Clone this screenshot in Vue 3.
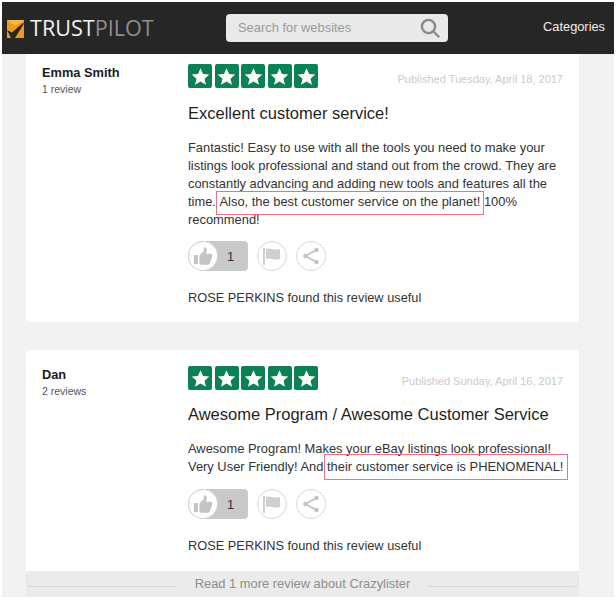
<script setup>
const reviews = [
  { name: 'Emma Smith', count: '1 review', date: 'Published Tuesday, April 18, 2017', title: 'Excellent customer service!' },
  { name: 'Dan', count: '2 reviews', date: 'Published Sunday, April 16, 2017', title: 'Awesome Program / Awesome Customer Service' }
]
const stars = [1, 2, 3, 4, 5]
</script>

<template>
  <div class="page">
    <header class="topbar">
      <div class="logo">
        <svg class="logo-mark" width="17" height="18" viewBox="0 0 17 18">
          <rect width="17" height="18" fill="#ef9a1c" />
          <path d="M0 0H17L8 6Z" fill="#f9b840" />
          <path d="M0 10L5 12.500L16 3L17 3.500L8 18H4Z" fill="#262626" />
        </svg>
        <span class="logo-a">TRUST</span><span class="logo-b">PILOT</span>
      </div>
      <div class="search">
        <span class="search-text">Search for websites</span>
        <svg width="20" height="20" viewBox="0 0 20 20" fill="none" stroke="#8a8a8a" stroke-width="2.4">
          <circle cx="8.500" cy="8.500" r="6.600" />
          <path d="M13.500 13.500L18.500 18.500" stroke-linecap="round" />
        </svg>
      </div>
      <div class="categories">Categories</div>
    </header>

    <main class="content">
      <article v-for="(r, i) in reviews" :key="r.name" class="card" :class="i === 0 ? 'first' : 'second'">
        <div class="author">
          <div class="name">{{ r.name }}</div>
          <div class="count">{{ r.count }}</div>
        </div>
        <div class="body">
          <div class="meta">
            <div class="stars">
              <span v-for="s in stars" :key="s" class="star">
                <svg width="19" height="19" viewBox="0 0 24 24"><path d="M12 1.500l3.200 7.300 7.900.7-6 5.200 1.800 7.800L12 18.400l-6.900 4.100 1.800-7.800-6-5.200 7.900-.7z" fill="#fff" /></svg>
              </span>
            </div>
            <div class="date">{{ r.date }}</div>
          </div>
          <h2 class="title">{{ r.title }}</h2>
          <p v-if="i === 0" class="text">
            Fantastic! Easy to use with all the tools you need to make your<br />
            listings look professional and stand out from the crowd. They are<br />
            constantly advancing and adding new tools and features all the<br />
            time. <span class="mark mark-a">Also, the best customer service on the planet!</span> 100%<br />
            recommend!
          </p>
          <p v-else class="text">
            Awesome Program! Makes your eBay listings look professional!<br />
            Very User Friendly! And <span class="mark mark-b">their customer service is PHENOMENAL!</span>
          </p>
          <div class="actions">
            <div class="like">
              <span class="like-circle">
                <svg width="22" height="22" viewBox="0 0 24 24" fill="#c4c4c4">
                  <rect x="2" y="11" width="4.500" height="10" rx="1" />
                  <path d="M8 11.500L12.500 7 13 2.500c2.500-.5 3.500 1.500 3 4l-.7 3H20.500c1.500 0 2.200 1.500 1.500 3l-2.500 7.500c-.3 1-1 1.500-2 1.500H10c-1 0-2-.5-2-1.500z" />
                </svg>
              </span>
              <span class="like-num">1</span>
            </div>
            <span class="round">
              <svg width="22" height="22" viewBox="0 0 22 22" fill="#cfcfcf">
                <rect x="2" y="3" width="2" height="17" />
                <path d="M5 4c4-2 7 2 14 0v10c-6 2-10-2-14 0z" />
              </svg>
            </span>
            <span class="round">
              <svg width="22" height="22" viewBox="0 0 22 22" fill="#c4c4c4" stroke="#c4c4c4">
                <path d="M16.500 5L5.500 11L16.500 17" fill="none" stroke-width="1.800" />
                <circle cx="16.500" cy="5" r="2.300" stroke="none" />
                <circle cx="5.500" cy="11" r="2.300" stroke="none" />
                <circle cx="16.500" cy="17" r="2.300" stroke="none" />
              </svg>
            </span>
          </div>
          <div class="useful">ROSE PERKINS found this review useful</div>
        </div>
      </article>

      <div class="more">
        <span class="rule"></span>
        <span class="more-text">Read 1 more review about Crazylister</span>
        <span class="rule rule-right"></span>
      </div>
    </main>
  </div>
</template>

<style>
html, body { margin: 0; background: #fff; overflow: hidden; }
</style>

<style scoped>
.page {
  width: 612px;
  height: 595px;
  margin: 2px 2px 0;
  background: #f2f2f2;
  font-family: "Liberation Sans", Arial, sans-serif;
  overflow: hidden;
}
.topbar {
  height: 52px;
  background: #262626;
  display: flex;
  align-items: center;
}
.logo {
  display: flex;
  align-items: center;
  margin-left: 5px;
  font-family: "Open Sans", "Liberation Sans", sans-serif;
  font-size: 21.600px;
  line-height: 50px;
  width: 219px;
}
.logo-mark { margin-right: 6px; margin-top: 1px; }
.logo-a { color: #f1f1f1; }
.logo-b { color: #8e8e8e; }
.search {
  width: 222px;
  height: 28px;
  box-sizing: border-box;
  background: #e9e9e9;
  border-radius: 4px;
  display: flex;
  align-items: center;
  justify-content: space-between;
  padding: 0 8px 0 12px;
  color: #9a9a9a;
  font-size: 12.900px;
}
.search-text { margin-bottom: 2px; }
.categories {
  margin-left: auto;
  margin-right: 9px;
  margin-bottom: 3px;
  color: #eee;
  font-size: 12.800px;
}
.content { padding: 0 35px 0 24px; }
.card {
  background: #fff;
  display: flex;
  box-sizing: border-box;
}
.first { height: 268px; padding-top: 10px; margin-bottom: 28px; border-radius: 0 0 4px 4px; }
.second { height: 221px; padding-top: 16px; border-radius: 4px 4px 0 0; }
.author { width: 162px; padding-left: 16px; box-sizing: border-box; flex: none; }
.name { font-weight: 700; font-size: 12.800px; color: #1c1c1c; line-height: 18px; }
.count { font-size: 10.500px; color: #555; line-height: 15px; }
.body { flex: 1; min-width: 0; padding-right: 16px; }
.meta { display: flex; justify-content: space-between; align-items: center; height: 24px; }
.stars { display: flex; gap: 2.500px; }
.star {
  width: 24px;
  height: 24px;
  background: #0b8154;
  border-radius: 2px;
  display: flex;
  align-items: center;
  justify-content: center;
}
.date { color: #cbcbcb; font-size: 11px; margin-top: 5px; }
.title { font-weight: 400; font-size: 16.500px; line-height: 22px; color: #1f1f1f; margin: 14px 0 0; }
.second .title { margin-top: 13px; }
.text { margin: 15px 0 0; font-size: 12.900px; line-height: 18px; color: #333; white-space: nowrap; }
.mark { outline: 1px solid #ee7182; outline-offset: -1px; padding: 0 4px; margin: 0 -4px; }
.mark-a { padding-top: 3px; padding-bottom: 6px; }
.mark-b { padding-top: 5px; padding-bottom: 6px; margin-left: -3px; padding-left: 3px; margin-right: -5px; padding-right: 5px; }
.actions { display: flex; align-items: center; margin-top: 12px; }
.second .actions { margin-top: 13px; }
.like {
  width: 60px;
  height: 30px;
  background: #c9c9c9;
  border-radius: 15px 4px 4px 15px;
  display: flex;
  align-items: center;
}
.like-circle {
  width: 28px;
  height: 28px;
  margin-left: 1px;
  border-radius: 50%;
  background: #fff;
  box-shadow: 0 0 0 1px #d6d6d6;
  display: flex;
  align-items: center;
  justify-content: center;
}
.like-num { margin-left: 10px; font-size: 12.900px; color: #333; }
.round {
  width: 28px;
  height: 28px;
  margin-left: 9px;
  border: 1px solid #d9d9d9;
  border-radius: 50%;
  display: flex;
  align-items: center;
  justify-content: center;
}
.useful { margin-top: 18px; font-size: 12.800px; line-height: 18px; color: #333; }
.more {
  height: 26px;
  background: #ebebeb;
  display: flex;
  align-items: flex-start;
  color: #8e8e8e;
  font-size: 12.900px;
  line-height: 18px;
  padding-top: 4px;
  box-sizing: border-box;
}
.rule {
  flex: 1;
  height: 12px;
  box-sizing: border-box;
  border-bottom: 1px solid #d8d8d8;
  border-left: 1px solid #e2e2e2;
  border-bottom-left-radius: 5px;
}
.rule-right {
  border-left: 0;
  border-right: 1px solid #e2e2e2;
  border-bottom-left-radius: 0;
  border-bottom-right-radius: 5px;
}
.more-text { margin: 0 18px; }
</style>
